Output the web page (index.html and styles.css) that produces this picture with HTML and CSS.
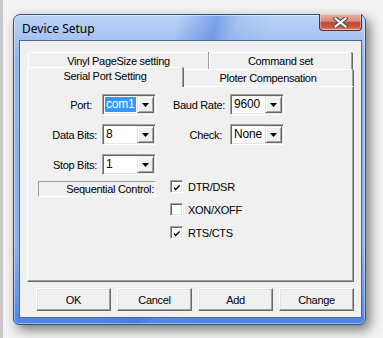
FILE: index.html
```html
<!DOCTYPE html>
<html>
<head>
<meta charset="utf-8">
<link rel="stylesheet" href="styles.css">
</head>
<body>
<div class="window">
  <div class="titlebar">
    <span class="title">Device Setup</span>
    <div class="close">
      <svg width="15" height="11" viewBox="0 0 15 11"><path d="M2.5 1.5 L12.5 9.5 M12.5 1.5 L2.5 9.5" stroke="#4a4a4a" stroke-width="4.2" stroke-linecap="square"/><path d="M2.5 1.5 L12.5 9.5 M12.5 1.5 L2.5 9.5" stroke="#ffffff" stroke-width="2.2" stroke-linecap="square"/></svg>
    </div>
  </div>
  <div class="client">
    <div class="tabctl">
      <div class="tabrow back">
        <div class="tab t-vinyl">Vinyl PageSize setting</div>
        <div class="tab t-cmd">Command set</div>
      </div>
      <div class="tabrow front">
        <div class="tab t-serial sel">Serial Port Setting</div>
        <div class="tab t-ploter">Ploter Compensation</div>
      </div>
      <div class="panel">
        <div class="fields">
          <span class="lbl l-port">Port:</span>
          <div class="combo"><span class="val hl">com1</span><span class="drop"><svg width="7" height="4" viewBox="0 0 7 4"><path d="M0 0H7L3.5 4Z" fill="#000"/></svg></span></div>
          <span class="lbl">Baud Rate:</span>
          <div class="combo"><span class="val">9600</span><span class="drop"><svg width="7" height="4" viewBox="0 0 7 4"><path d="M0 0H7L3.5 4Z" fill="#000"/></svg></span></div>

          <span class="lbl">Data Bits:</span>
          <div class="combo"><span class="val">8</span><span class="drop"><svg width="7" height="4" viewBox="0 0 7 4"><path d="M0 0H7L3.5 4Z" fill="#000"/></svg></span></div>
          <span class="lbl l-check">Check:</span>
          <div class="combo"><span class="val">None</span><span class="drop"><svg width="7" height="4" viewBox="0 0 7 4"><path d="M0 0H7L3.5 4Z" fill="#000"/></svg></span></div>

          <span class="lbl">Stop Bits:</span>
          <div class="combo"><span class="val">1</span><span class="drop"><svg width="7" height="4" viewBox="0 0 7 4"><path d="M0 0H7L3.5 4Z" fill="#000"/></svg></span></div>
        </div>
        <div class="lower">
          <div class="seq">Sequential Control:</div>
          <div class="checks">
            <label class="chk"><span class="box"><svg width="9" height="9" viewBox="0 0 9 9"><path d="M1 3.5 L3 5.5 L7.5 1 V3.5 L3 8 L1 6 Z" fill="#000"/></svg></span>DTR/DSR</label>
            <label class="chk"><span class="box"></span>XON/XOFF</label>
            <label class="chk"><span class="box"><svg width="9" height="9" viewBox="0 0 9 9"><path d="M1 3.5 L3 5.5 L7.5 1 V3.5 L3 8 L1 6 Z" fill="#000"/></svg></span>RTS/CTS</label>
          </div>
        </div>
      </div>
    </div>
    <div class="buttons">
      <button class="btn">OK</button>
      <button class="btn">Cancel</button>
      <button class="btn">Add</button>
      <button class="btn">Change</button>
    </div>
  </div>
</div>
</body>
</html>
```
FILE: styles.css
```css
* { box-sizing: border-box; }
html, body { margin: 0; padding: 0; }
body {
  width: 383px;
  height: 338px;
  overflow: hidden;
  background: #f3f3f3;
  border-left: 3px solid #c8c8c8;
  padding-top: 14px;
  padding-left: 10px;
  font-family: "Liberation Sans", Arial, sans-serif;
  font-size: 11px;
  letter-spacing: -0.3px;
  color: #000;
}
.window {
  width: 353px;
  height: 311px;
  border: 1px solid #34507a;
  border-radius: 7px 7px 6px 6px;
  padding: 0 3px 6px 5px;
  display: flex;
  flex-direction: column;
  background:
    linear-gradient(105deg, rgba(255,255,255,0) 38%, rgba(50,105,215,0.45) 47%, rgba(100,145,230,0.2) 52%, rgba(255,255,255,0) 60%),
    linear-gradient(180deg, #bcd3f5 0%, #93b5ee 14%, #8db1ee 75%, #4c85e8 100%);
  box-shadow: 4px 5px 12px rgba(0,0,0,0.5), inset 0 0 0 1px rgba(255,255,255,0.45);
}
.titlebar {
  height: 25px;
  display: flex;
  justify-content: space-between;
  align-items: flex-start;
}
.title {
  font-family: "Noto Sans", "Open Sans", sans-serif;
  font-size: 12px;
  letter-spacing: 0;
  padding: 5px 0 0 3px;
  color: #000;
}
.close {
  width: 43px;
  height: 17px;
  margin-top: -1px;
  border: 1px solid #6b2a22;
  border-top: none;
  border-radius: 0 0 4px 4px;
  background: linear-gradient(180deg, #eab0a4 0%, #db8a7b 45%, #c24a36 52%, #c65640 80%, #e2927a 100%);
  box-shadow: inset 0 0 0 1px rgba(255,255,255,0.35);
  display: flex;
  align-items: center;
  justify-content: center;
}
.client {
  flex: 1;
  border: 1px solid #4e6688;
  background: #f0f0f0;
  display: flex;
  flex-direction: column;
}
.tabctl {
  margin: 11px 0 0 7px;
  width: 327px;
}
.tabrow {
  display: flex;
  height: 17px;
}
.tabrow.back { padding-left: 1px; }
.tabrow.front { align-items: flex-end; }
.tab {
  height: 17px;
  background: #f0f0f0;
  border: 1px solid;
  border-color: #ffffff #a0a0a0 transparent #ffffff;
  border-bottom: none;
  border-radius: 2px 2px 0 0;
  box-shadow: 1px 0 0 #696969;
  text-align: center;
  line-height: 16px;
  white-space: nowrap;
}
.t-vinyl { width: 181px; }
.t-cmd { width: 143px; }
.t-serial { width: 156px; }
.t-ploter { width: 170px; }
.tab.sel {
  height: 20px;
  margin-bottom: -1px;
  position: relative;
  z-index: 1;
  line-height: 16px;
}
.panel {
  height: 196px;
  border: 1px solid;
  border-color: #ffffff #696969 #696969 #ffffff;
  box-shadow: inset -1px -1px 0 #a0a0a0;
  padding: 7px 0 0 0;
}
.fields {
  display: grid;
  grid-template-columns: 69px 54px 64px 54px;
  column-gap: 5px;
  row-gap: 9px;
  grid-auto-rows: 21px;
  align-items: center;
}
.lbl {
  text-align: right;
  white-space: nowrap;
}
.l-port { padding-right: 5px; }
.l-check { padding-right: 3px; }
.combo {
  width: 54px;
  height: 21px;
  display: flex;
  background: #fff;
  border: 1px solid;
  border-color: #a0a0a0 #ffffff #ffffff #a0a0a0;
  box-shadow: inset 1px 1px 0 #696969, inset -1px -1px 0 #e3e3e3;
  padding: 1px;
}
.val {
  flex: 1;
  margin: 1px;
  padding-left: 1px;
  line-height: 15px;
  font-size: 12px;
  letter-spacing: -0.2px;
}
.val.hl { background: #3399ff; color: #fff; }
.drop {
  width: 17px;
  background: #f0f0f0;
  border: 1px solid;
  border-color: #e3e3e3 #696969 #696969 #e3e3e3;
  box-shadow: inset 1px 1px 0 #ffffff, inset -1px -1px 0 #a0a0a0;
  display: flex;
  align-items: center;
  justify-content: center;
}
.drop svg { display: block; }
.lower {
  display: flex;
  margin-top: 6px;
}
.seq {
  margin-left: 10px;
  width: 118px;
  height: 16px;
  border: 1px solid;
  border-color: #a0a0a0 #ffffff #ffffff #a0a0a0;
  text-align: right;
  padding-right: 1px;
  line-height: 14px;
  white-space: nowrap;
}
.checks {
  margin-left: 14px;
  display: flex;
  flex-direction: column;
  gap: 10px;
  margin-top: -1px;
}
.chk {
  display: flex;
  align-items: center;
  height: 13px;
  gap: 5px;
}
.box {
  width: 13px;
  height: 13px;
  background: #fff;
  border: 1px solid;
  border-color: #a0a0a0 #ffffff #ffffff #a0a0a0;
  box-shadow: inset 1px 1px 0 #696969, inset -1px -1px 0 #e3e3e3;
  padding: 1px;
  display: flex;
}
.box svg { display: block; margin: 1px 0 0 1px; }
.buttons {
  display: flex;
  gap: 6px;
  margin: 6px 0 0 16px;
}
.btn {
  width: 75px;
  height: 23px;
  padding: 0;
  background: #f0f0f0;
  border: 1px solid;
  border-color: #ffffff #696969 #696969 #ffffff;
  box-shadow: inset -1px -1px 0 #a0a0a0, inset 1px 1px 0 #e3e3e3;
  font-family: "Liberation Sans", Arial, sans-serif;
  font-size: 11px;
  letter-spacing: -0.3px;
  color: #000;
}
```
